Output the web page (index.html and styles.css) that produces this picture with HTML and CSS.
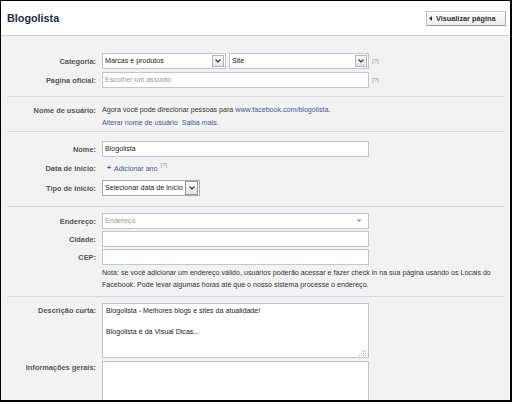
FILE: index.html
```html
<!DOCTYPE html>
<html lang="pt-BR">
<head>
<meta charset="utf-8">
<title>Blogolista</title>
<link rel="stylesheet" href="styles.css">
</head>
<body>
<div class="frame">
  <header class="top">
    <h1 class="title">Blogolista</h1>
    <a class="view-btn"><svg class="arr" width="3" height="5" viewBox="0 0 3 5"><path d="M3 0 V5 L0 2.5 Z" fill="#333"/></svg>Visualizar página</a>
  </header>
  <main class="content">
    <section class="sec sec-cat">
      <label class="lbl">Categoria:</label>
      <div class="field">
        <div class="select sel-cat"><span class="sel-txt">Marcas e produtos</span><span class="dd"><svg width="10" height="10" viewBox="0 0 10 10"><path d="M2.5 3.5 L5 6 L7.5 3.5" fill="none" stroke="#333" stroke-width="1.2"/></svg></span></div>
        <div class="select sel-site"><span class="sel-txt">Site</span><span class="dd"><svg width="10" height="10" viewBox="0 0 10 10"><path d="M2.5 3.5 L5 6 L7.5 3.5" fill="none" stroke="#333" stroke-width="1.2"/></svg></span></div>
        <span class="help">[?]</span>
      </div>
      <label class="lbl">Página oficial:</label>
      <div class="field">
        <div class="input wide placeholder">Escolher um assunto</div>
        <span class="help">[?]</span>
      </div>
    </section>

    <section class="sec sec-user">
      <label class="lbl lbl-top">Nome de usuário:</label>
      <div class="text-block">
        <div>Agora você pode direcionar pessoas para <a class="link">www.facebook.com/blogolista.</a></div>
        <div><a class="link">Alterar nome de usuário</a>&nbsp;&nbsp;<a class="link">Saiba mais.</a></div>
      </div>
    </section>

    <section class="sec sec-name">
      <label class="lbl">Nome:</label>
      <div class="field"><div class="input wide">Blogolista</div></div>
      <label class="lbl">Data de início:</label>
      <div class="field add-year"><span class="plus">+</span><a class="link">Adicionar ano</a><sup class="help sup">[?]</sup></div>
      <label class="lbl">Tipo de início:</label>
      <div class="field">
        <div class="select sel-type"><span class="sel-txt">Selecionar data de início</span><span class="dd dd-box"><svg width="10" height="10" viewBox="0 0 10 10"><path d="M2.5 3.5 L5 6 L7.5 3.5" fill="none" stroke="#333" stroke-width="1.2"/></svg></span></div>
      </div>
    </section>

    <section class="sec sec-addr">
      <label class="lbl">Endereço:</label>
      <div class="field">
        <div class="input wide placeholder addr"><span>Endereço</span><svg width="6" height="4" viewBox="0 0 6 4"><path d="M0.5 0.5 H5.5 L3 3 Z" fill="#7f93bc"/></svg></div>
      </div>
      <label class="lbl">Cidade:</label>
      <div class="field"><div class="input wide"></div></div>
      <label class="lbl">CEP:</label>
      <div class="field"><div class="input wide"></div></div>
      <p class="note">Nota: se você adicionar um endereço válido, usuários poderão acessar e fazer check in na sua página usando os Locais do<br>Facebook. Pode levar algumas horas até que o nosso sistema processe o endereço.</p>
    </section>

    <section class="sec sec-desc">
      <label class="lbl lbl-top">Descrição curta:</label>
      <div class="textarea ta-desc">
        <div>Blogolista - Melhores blogs e sites da atualidade!</div>
        <div>&nbsp;</div>
        <div>Blogolista é da Visual Dicas...</div>
        <svg class="grip" width="8" height="7" viewBox="0 0 8 7"><g fill="#aaa"><rect x="6" y="0" width="1" height="1"/><rect x="4" y="2" width="1" height="1"/><rect x="6" y="2" width="1" height="1"/><rect x="2" y="4" width="1" height="1"/><rect x="4" y="4" width="1" height="1"/><rect x="6" y="4" width="1" height="1"/><rect x="0" y="6" width="1" height="1"/><rect x="2" y="6" width="1" height="1"/><rect x="4" y="6" width="1" height="1"/><rect x="6" y="6" width="1" height="1"/></g></svg>
      </div>
      <label class="lbl lbl-top lbl-info">Informações gerais:</label>
      <div class="textarea ta-info"></div>
    </section>
  </main>
</div>
</body>
</html>
```
FILE: styles.css
```css
* { box-sizing: border-box; margin: 0; padding: 0; }
html, body { width: 512px; height: 402px; overflow: hidden; }
body {
  font-family: "Liberation Sans", Arial, sans-serif;
  font-size: 7.1px;
  color: #333;
  background: #fff;
}
.frame {
  width: 512px;
  height: 402px;
  border-style: solid;
  border-color: #000;
  border-width: 1px 2px 2px 1px;
  background: #f2f2f2;
  overflow: hidden;
  display: flex;
  flex-direction: column;
}
.top {
  flex: none;
  height: 35px;
  background: #fff;
  border-bottom: 1px solid #cfcfcf;
  display: flex;
  align-items: center;
  justify-content: space-between;
  padding: 0 4px 0 6px;
}
.title {
  font-size: 10.8px;
  font-weight: bold;
  color: #1c2a47;
  line-height: 12px;
}
.view-btn {
  width: 80px;
  height: 15px;
  display: flex;
  align-items: center;
  gap: 4px;
  padding: 0 4px 0 2px;
  border: 1px solid #aaa;
  border-color: #c4c4c4 #a8a8a8 #999 #c4c4c4;
  background: linear-gradient(#fdfdfd, #ececec);
  font-weight: bold;
  font-size: 7.3px;
  color: #333;
  white-space: nowrap;
}
.arr { flex: none; }
.content { flex: 1; padding: 0 6px; }
.sec {
  display: grid;
  grid-template-columns: 89px max-content;
  column-gap: 6px;
  align-items: center;
  border-top: 1px solid #dadada;
}
.sec-cat { border-top: none; padding: 17px 0 8px; row-gap: 3px; }
.sec-user { padding: 7px 0 1px; line-height: 13px; }
.sec-name { padding: 9px 0 10px; row-gap: 4px; }
.sec-addr { padding: 6px 0 5px; row-gap: 2px; }
.sec-desc { padding: 6px 0 0; row-gap: 3px; }
.lbl {
  text-align: right;
  font-weight: bold;
  font-size: 7.4px;
  color: #555;
  white-space: nowrap;
}
.lbl-top { align-self: start; }
.sec-desc .lbl-top { line-height: 10px; padding-top: 3px; }
.sec-desc .lbl-info { padding-top: 2px; }
.field { display: flex; align-items: center; height: 16px; }
.input, .select {
  height: 16px;
  background: #fff;
  border: 1px solid #bdc7d8;
  line-height: 14px;
  padding-left: 2px;
  white-space: nowrap;
}
.wide { width: 267px; }
.placeholder { color: #999; }
.help { color: #999; font-size: 6px; margin-left: 3px; }
.select {
  display: flex;
  align-items: center;
  justify-content: space-between;
  padding-right: 1px;
}
.sel-cat { width: 124px; }
.sel-site { width: 140px; margin-left: 3px; }
.sel-type { width: 98px; border-color: #a5acb5; }
.dd {
  flex: none;
  width: 12px;
  height: 12px;
  border: 1px solid #b5b5b5;
  background: linear-gradient(#fafafa, #e4e4e4);
  display: flex;
  align-items: center;
  justify-content: center;
}
.dd-box { height: 14px; width: 13px; border-color: #999; margin-left: 2px; }
.sel-txt { color: #222; }
.input:not(.placeholder) { color: #222; }
.addr { display: flex; align-items: center; justify-content: space-between; padding-right: 6px; }
.link { color: #3b5998; text-decoration: none; }
.text-block { line-height: 13px; }
.add-year { height: 15px; }
.plus { color: #3b5998; font-weight: bold; margin: 0 3px 0 5px; font-size: 7px; position: relative; top: -1px; }
.sup { position: relative; top: -4px; font-size: 6px; margin-left: 3px; vertical-align: baseline; }
.note { grid-column: 2; line-height: 12px; white-space: nowrap; color: #333; }
.textarea {
  width: 267px;
  background: #fff;
  border: 1px solid #bdc7d8;
  padding: 2px 3px;
  line-height: 10.5px;
  color: #222;
  position: relative;
}
.ta-desc { height: 55px; }
.ta-info { height: 60px; }
.grip { position: absolute; right: 1px; bottom: 1px; }
```
